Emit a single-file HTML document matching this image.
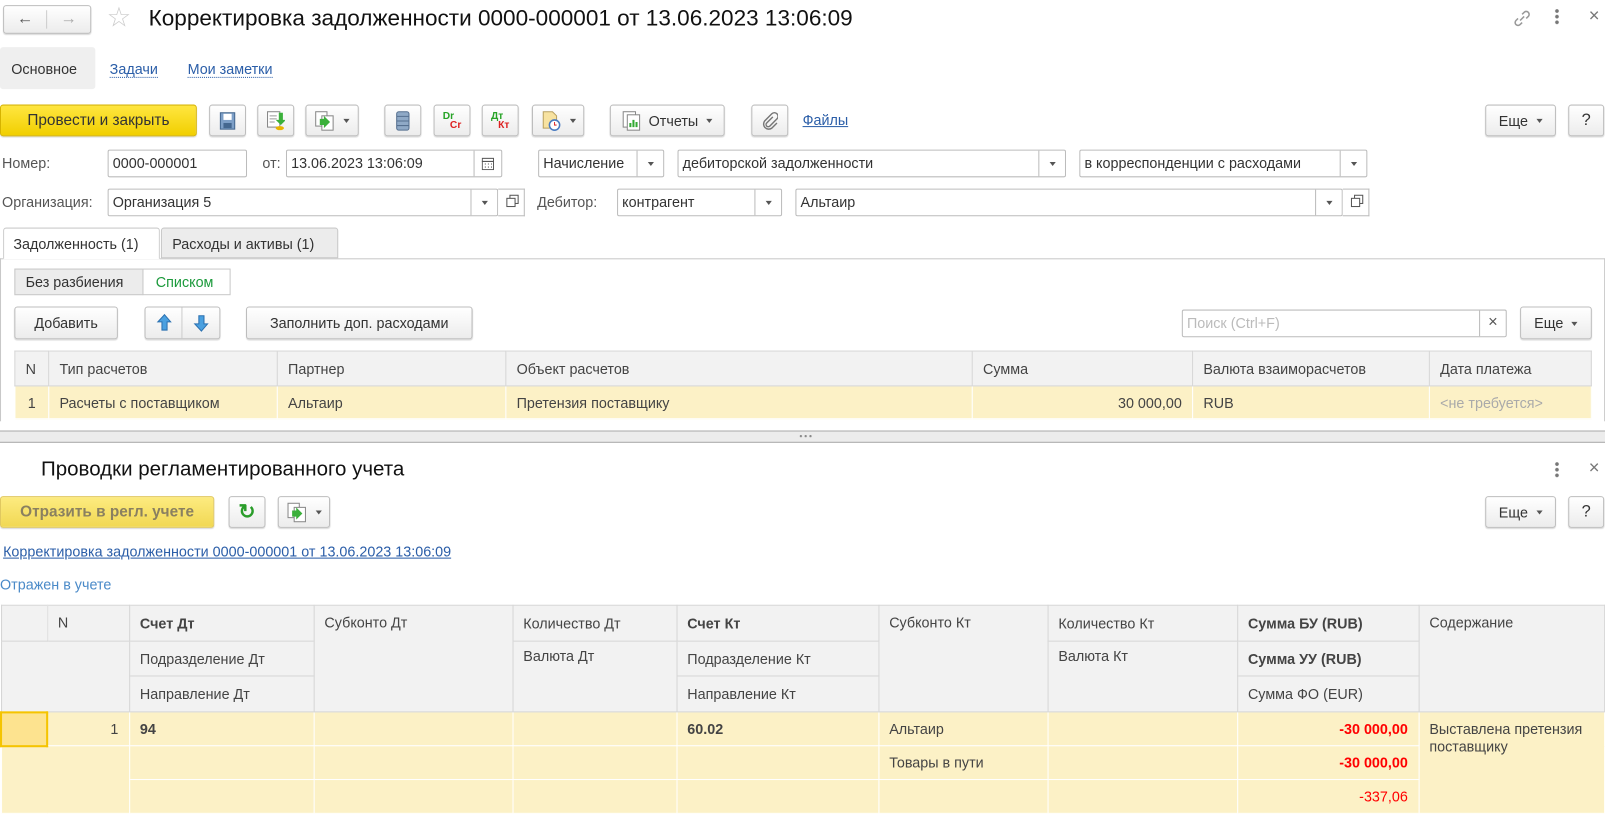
<!DOCTYPE html>
<html><head><meta charset="utf-8"><style>
*{box-sizing:border-box}
body{margin:0;width:1605px;height:811px;overflow:hidden;background:#fff;font-family:"Liberation Sans",Arial,sans-serif;font-size:14px;color:#333}
#w{position:absolute;left:0;top:0;width:1566px;height:795px;transform:scale(1.025);transform-origin:0 0}
.a{position:absolute;white-space:nowrap}
.btn{position:absolute;border:1px solid #bdbdbd;border-radius:3px;background:linear-gradient(#fff,#ececec);box-shadow:0 1px 1px rgba(0,0,0,.15);display:flex;align-items:center;justify-content:center;font-size:14px;color:#333}
.inp{position:absolute;border:1px solid #bcbcbc;border-radius:2px;background:#fff;height:27px;line-height:25px;padding-left:4px;font-size:14px;color:#333;white-space:nowrap}
.dd{position:absolute;top:0;right:0;width:26px;height:25px;border-left:1px solid #bcbcbc}
.dd:after{content:"";position:absolute;left:10px;top:11px;border:3px solid transparent;border-top:4px solid #555}
.cl{position:absolute;top:0;right:0;width:26px;height:25px;border-left:1px solid #bcbcbc;color:#555;text-align:center;font-size:16px;line-height:24px}
.tri{display:inline-block;border:3px solid transparent;border-top:4px solid #555;margin-left:8px;margin-top:4px}
.ob{position:absolute;width:26px;height:27px;border:1px solid #bcbcbc;border-left:none;background:#fff}
.ob:after{content:"";position:absolute;left:8px;top:8px;width:7px;height:7px;border:1px solid #555;box-shadow:3px -3px 0 -1px #fff,3px -3px 0 0 #555}
.lbl{position:absolute;color:#555;font-size:14px}
table{border-collapse:collapse;position:absolute}
td{border:1px solid #d6d6d6;padding:0 10px;font-size:14px;color:#444;white-space:nowrap}
.h td{background:#f2f2f2}
.y td{background:#fcf1c6;border-color:#fff}
</style></head><body><div id="w">
<div class="btn" style="left:3px;top:5px;width:86px;height:28px;padding:0"><div style="width:43px;text-align:center;border-right:1px solid #ccc;font-size:16px;color:#555;font-weight:bold">←</div><div style="width:43px;text-align:center;font-size:16px;color:#aaa;font-weight:bold">→</div></div>
<div class="a" style="left:104px;top:2px;font-size:27px;color:#ccc">☆</div>
<div class="a" style="left:145px;top:5px;font-size:22px;color:#111">Корректировка задолженности 0000-000001 от 13.06.2023 13:06:09</div>
<svg class="a" style="left:1475px;top:8px" width="20" height="20" viewBox="0 0 20 20"><path d="M8 12l4-4M6 10l-2 2a2.8 2.8 0 004 4l2-2M14 10l2-2a2.8 2.8 0 00-4-4l-2 2" stroke="#999" stroke-width="1.5" fill="none"/></svg>
<div class="a" style="left:1517px;top:8px;width:4px;height:16px;background:radial-gradient(circle,#777 1.6px,transparent 2px) 0 0/4px 5.5px"></div>
<div class="a" style="left:1550px;top:5px;font-size:18px;color:#777">×</div>
<div class="a" style="left:0;top:46px;width:93px;height:41px;background:#efefef;border-radius:3px"></div>
<div class="a" style="left:11px;top:59px;color:#333">Основное</div>
<div class="a" style="left:107px;top:59px;color:#2b5ea8;border-bottom:1px dotted #2b5ea8">Задачи</div>
<div class="a" style="left:183px;top:59px;color:#2b5ea8;border-bottom:1px dotted #2b5ea8">Мои заметки</div>
<div class="btn" style="left:0;top:102px;width:192px;height:31px;background:linear-gradient(#ffe640,#f1cf00);border-color:#d6b300;color:#333;font-size:15px">Провести и закрыть</div>
<div class="btn" style="left:204px;top:102px;width:36px;height:31px"><svg width="16" height="18"><rect x="1" y="1" width="14" height="16" fill="#7d9fc7" stroke="#44678f"/><rect x="4" y="2" width="8" height="6" fill="#fff"/><rect x="4" y="11" width="8" height="5" fill="#44678f"/></svg></div>
<div class="btn" style="left:251px;top:102px;width:36px;height:31px"><svg width="18" height="20"><rect x="1" y="1" width="12" height="15" fill="#fff" stroke="#888"/><path d="M3 5h7M3 8h7M3 11h5" stroke="#999"/><path d="M12 2v7h-3l5 5 5-5h-3V2z" fill="#3bb03b"/><ellipse cx="13" cy="17" rx="4" ry="2" fill="#e8b400"/></svg></div>
<div class="btn" style="left:298px;top:102px;width:52px;height:31px"><svg width="20" height="20"><rect x="1" y="1" width="11" height="14" fill="#fff" stroke="#888"/><rect x="7" y="5" width="11" height="14" fill="#fff" stroke="#888"/><path d="M5 8h4v-3l6 6-6 6v-3H5z" fill="#3bb03b"/></svg><span class="tri"></span></div>
<div class="btn" style="left:375px;top:102px;width:36px;height:31px"><svg width="14" height="20"><rect x="1" y="1" width="12" height="18" rx="2" fill="#8fa9c6" stroke="#556f8f"/><path d="M1 5.5h12M1 10h12M1 14.5h12" stroke="#556f8f"/></svg></div>
<div class="btn" style="left:423px;top:102px;width:36px;height:31px;font-size:10px;font-weight:bold;line-height:9px"><div><span style="color:#27a327">Dr</span><br><span style="color:#d22;margin-left:7px">Cr</span></div></div>
<div class="btn" style="left:470px;top:102px;width:36px;height:31px;font-size:10px;font-weight:bold;line-height:9px"><div><span style="color:#27a327">Дт</span><br><span style="color:#d22;margin-left:7px">Кт</span></div></div>
<div class="btn" style="left:519px;top:102px;width:51px;height:31px"><svg width="20" height="20"><path d="M2 1h9l4 4v12H2z" fill="#f7e2a0" stroke="#b8a060"/><circle cx="13" cy="14" r="5" fill="#fff" stroke="#4a7bc0" stroke-width="1.5"/><path d="M13 11v3h2" stroke="#d33" fill="none"/></svg><span class="tri"></span></div>
<div class="btn" style="left:595px;top:102px;width:112px;height:31px"><svg width="18" height="20" style="margin-right:8px"><rect x="1" y="1" width="12" height="15" fill="#fff" stroke="#888"/><rect x="5" y="4" width="12" height="15" fill="#fff" stroke="#888"/><path d="M8 16v-4M11 16v-7M14 16v-5" stroke="#3a3" stroke-width="2"/></svg>Отчеты<span class="tri"></span></div>
<div class="btn" style="left:733px;top:102px;width:36px;height:31px"><svg width="16" height="18"><path d="M11 5l-6 6a2 2 0 003 3l7-7a3.5 3.5 0 00-5-5L3 9a5 5 0 007 7l5-5" stroke="#777" stroke-width="1.4" fill="none"/></svg></div>
<div class="a" style="left:783px;top:109px;color:#2b5ea8;text-decoration:underline">Файлы</div>
<div class="btn" style="left:1449px;top:102px;width:69px;height:31px">Еще<span class="tri"></span></div>
<div class="btn" style="left:1530px;top:102px;width:35px;height:31px;font-size:16px">?</div>
<div class="lbl" style="left:2px;top:151px">Номер:</div>
<div class="inp" style="left:105px;top:146px;width:136px">0000-000001</div>
<div class="lbl" style="left:256px;top:151px">от:</div>
<div class="inp" style="left:279px;top:146px;width:211px">13.06.2023 13:06:09<div class="cl" style="width:27px"><svg style="position:absolute;left:7px;top:6px" width="12" height="13"><rect x="0.5" y="1.5" width="11" height="11" fill="none" stroke="#555"/><path d="M0 4.5h12M3 7h1M6 7h1M9 7h1M3 10h1M6 10h1M9 10h1" stroke="#555"/></svg></div></div>
<div class="inp" style="left:525px;top:146px;width:123px">Начисление<div class="dd"></div></div>
<div class="inp" style="left:661px;top:146px;width:379px">дебиторской задолженности<div class="dd"></div></div>
<div class="inp" style="left:1053px;top:146px;width:281px">в корреспонденции с расходами<div class="dd"></div></div>
<div class="lbl" style="left:2px;top:189px">Организация:</div>
<div class="inp" style="left:105px;top:184px;width:381px">Организация 5<div class="dd"></div></div>
<div class="ob" style="left:486px;top:184px"></div>
<div class="lbl" style="left:524px;top:189px">Дебитор:</div>
<div class="inp" style="left:602px;top:184px;width:161px">контрагент<div class="dd"></div></div>
<div class="inp" style="left:776px;top:184px;width:534px">Альтаир<div class="dd"></div></div>
<div class="ob" style="left:1310px;top:184px"></div>
<div class="a" style="left:0;top:252px;width:1566px;height:160px;border:1px solid #c8c8c8;border-bottom:none"></div>
<div class="a" style="left:3px;top:222px;width:153px;height:31px;background:#fff;border:1px solid #c8c8c8;border-bottom:1px solid #fff;border-radius:3px 3px 0 0;padding:7px 0 0 9px;color:#333">Задолженность (1)</div>
<div class="a" style="left:157px;top:222px;width:173px;height:30px;background:#ececec;border:1px solid #c8c8c8;border-radius:3px 3px 0 0;padding:7px 0 0 10px;color:#333">Расходы и активы (1)</div>
<div class="a" style="left:14px;top:262px;width:126px;height:26px;background:#ececec;border:1px solid #c8c8c8;padding:4px 0 0 10px">Без разбиения</div>
<div class="a" style="left:139px;top:262px;width:86px;height:26px;background:#fff;border:1px solid #c8c8c8;padding:4px 0 0 12px;color:#1c9a3c">Списком</div>
<div class="btn" style="left:14px;top:299px;width:101px;height:32px">Добавить</div>
<div class="btn" style="left:141px;top:299px;width:74px;height:32px;padding:0"><svg width="37" height="30" style="border-right:1px solid #ccc"><path d="M18.5 7l6 7h-3.5v8h-5v-8H12z" fill="#4aa0e0" stroke="#2a70b0"/></svg><svg width="37" height="30"><path d="M18.5 23l6-7h-3.5V8h-5v8H12z" fill="#4aa0e0" stroke="#2a70b0"/></svg></div>
<div class="btn" style="left:240px;top:299px;width:221px;height:32px">Заполнить доп. расходами</div>
<div class="inp" style="left:1153px;top:302px;width:317px;color:#bbb">Поиск (Ctrl+F)<div class="cl">×</div></div>
<div class="btn" style="left:1483px;top:299px;width:70px;height:32px">Еще<span class="tri"></span></div>
<table style="left:14px;top:342px;width:1539px">
<tr class="h" style="height:34px"><td style="width:33px">N</td><td style="width:223px">Тип расчетов</td><td style="width:223px">Партнер</td><td style="width:455px">Объект расчетов</td><td style="width:215px">Сумма</td><td style="width:231px">Валюта взаиморасчетов</td><td>Дата платежа</td></tr>
<tr class="y" style="height:32px"><td style="text-align:center;padding:0">1</td><td>Расчеты с поставщиком</td><td>Альтаир</td><td>Претензия поставщику</td><td style="text-align:right">30 000,00</td><td>RUB</td><td style="color:#aaa">&lt;не требуется&gt;</td></tr>
</table>
<div class="a" style="left:0;top:411px;width:1566px;height:11px;background:#fff"></div>
<div class="a" style="left:0;top:420px;width:1566px;height:12px;background:#ececec;border-top:1px solid #aaa;border-bottom:1px solid #aaa"></div>
<div class="a" style="left:779px;top:424px;width:14px;height:3px;background:radial-gradient(circle,#888 1px,transparent 1.3px) 0 0/4.7px 3px"></div>
<div class="a" style="left:40px;top:447px;font-size:20px;color:#111">Проводки регламентированного учета</div>
<div class="a" style="left:1517px;top:450px;width:4px;height:16px;background:radial-gradient(circle,#777 1.6px,transparent 2px) 0 0/4px 5.5px"></div>
<div class="a" style="left:1550px;top:446px;font-size:18px;color:#777">×</div>
<div class="btn" style="left:0;top:484px;width:209px;height:31px;background:linear-gradient(#fdeb80,#f1d853);border-color:#e0c860;color:#8a8060;font-size:15px;font-weight:bold">Отразить в регл. учете</div>
<div class="btn" style="left:223px;top:484px;width:36px;height:31px;color:#2a9d2a;font-size:20px;font-weight:bold">↻</div>
<div class="btn" style="left:271px;top:484px;width:51px;height:31px"><svg width="20" height="20"><rect x="1" y="1" width="11" height="14" fill="#fff" stroke="#888"/><rect x="7" y="5" width="11" height="14" fill="#fff" stroke="#888"/><path d="M5 8h4v-3l6 6-6 6v-3H5z" fill="#3bb03b"/></svg><span class="tri"></span></div>
<div class="btn" style="left:1449px;top:484px;width:69px;height:31px">Еще<span class="tri"></span></div>
<div class="btn" style="left:1530px;top:484px;width:35px;height:31px;font-size:16px">?</div>
<div class="a" style="left:3px;top:530px;color:#2b5ea8;text-decoration:underline">Корректировка задолженности 0000-000001 от 13.06.2023 13:06:09</div>
<div class="a" style="left:0;top:562px;color:#4a8ac8">Отражен в учете</div>
<table style="left:0;top:590px;width:1566px;border:1px solid #aaa">
<tr class="h" style="height:35px"><td style="width:45px;border-right-color:#e0e0e0"></td><td style="width:80px;vertical-align:top;padding-top:8px">N</td><td style="width:180px"><b>Счет Дт</b></td><td rowspan="3" style="width:194px;vertical-align:top;padding-top:8px">Субконто Дт</td><td style="width:160px">Количество Дт</td><td style="width:197px"><b>Счет Кт</b></td><td rowspan="3" style="width:165px;vertical-align:top;padding-top:8px">Субконто Кт</td><td style="width:185px">Количество Кт</td><td style="width:177px"><b>Сумма БУ (RUB)</b></td><td rowspan="3" style="vertical-align:top;padding-top:8px">Содержание</td></tr>
<tr class="h" style="height:34px"><td colspan="2" rowspan="2" style="border-top-color:#f2f2f2"></td><td>Подразделение Дт</td><td rowspan="2" style="vertical-align:top;padding-top:6px">Валюта Дт</td><td>Подразделение Кт</td><td rowspan="2" style="vertical-align:top;padding-top:6px">Валюта Кт</td><td><b>Сумма УУ (RUB)</b></td></tr>
<tr class="h" style="height:35px"><td>Направление Дт</td><td>Направление Кт</td><td>Сумма ФО (EUR)</td></tr>
<tr class="y" style="height:33px"><td style="background:#fde38f;border:2px solid #f5c400"></td><td style="text-align:right">1</td><td><b>94</b></td><td></td><td></td><td><b>60.02</b></td><td>Альтаир</td><td></td><td style="text-align:right;color:#f00;font-weight:bold">-30 000,00</td><td rowspan="3" style="vertical-align:top;padding-top:8px;white-space:normal;line-height:17px">Выставлена претензия поставщику</td></tr>
<tr class="y" style="height:33px"><td colspan="2" rowspan="2"></td><td></td><td></td><td></td><td></td><td>Товары в пути</td><td></td><td style="text-align:right;color:#f00;font-weight:bold">-30 000,00</td></tr>
<tr class="y" style="height:33px"><td></td><td></td><td></td><td></td><td></td><td></td><td style="text-align:right;color:#f00">-337,06</td></tr>
</table>
</div></body></html>
